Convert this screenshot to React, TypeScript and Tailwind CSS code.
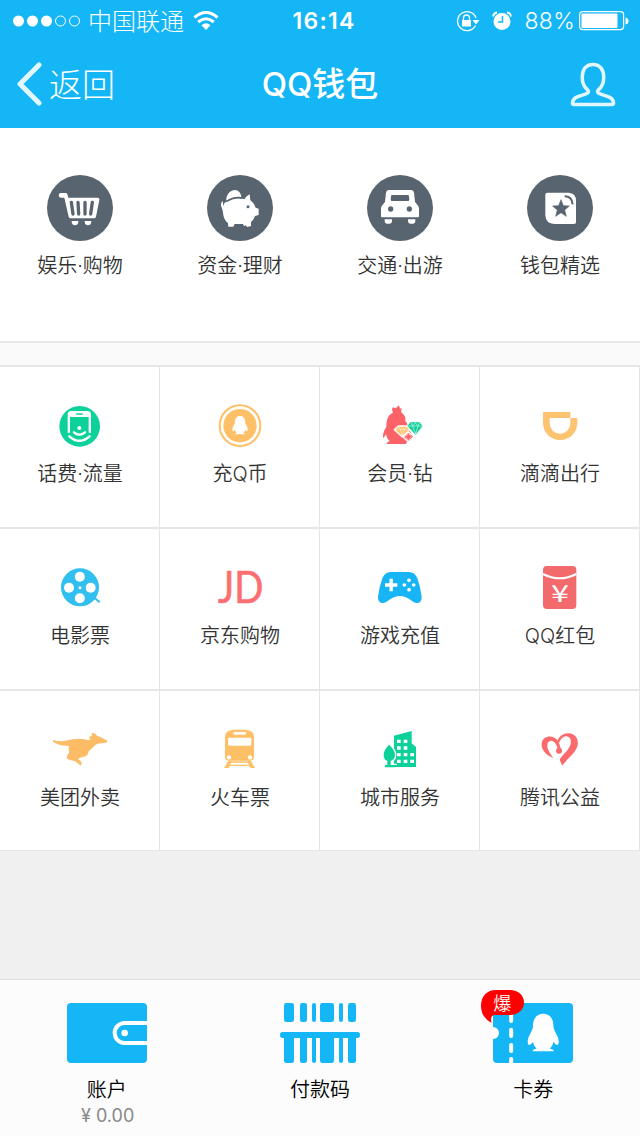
import type { ReactNode } from "react";

type Item = {
  label: string;
  icon: ReactNode;
};

const penguin =
  "M35 0C20 0 13 12 13 27C13 36 7 43 3 54C0 64 2 70 5 70C8 70 11 66 13 63C14 70 17 75 21 78C14 80 12 82 12 84H58C58 82 56 80 49 78C53 75 56 70 57 63C59 66 62 70 65 70C68 70 70 64 67 54C63 43 57 36 57 27C57 12 50 0 35 0Z";

function RoundIcon({ children }: { children: ReactNode }) {
  return (
    <svg viewBox="0 0 198 198" className="size-[66px]">
      <circle cx="99" cy="99" r="99" fill="#586571" />
      {children}
    </svg>
  );
}

function GridIcon({ children }: { children: ReactNode }) {
  return (
    <svg viewBox="0 0 180 180" className="size-[60px]">
      {children}
    </svg>
  );
}

const topItems: Item[] = [
  {
    label: "娱乐·购物",
    icon: (
      <RoundIcon>
        <path
          d="M42 54H56Q60 54 61 58L64 68H151Q158 68 157 75L147 125Q146 130 141 130H71Q66 130 65 125L52 68H42Q35 68 35 61T42 54Z"
          fill="#fff"
        />
        <path
          d="M73 82L78 117M93 82L95 117M114 82V117M136 82L131 117"
          stroke="#586571"
          strokeWidth="10"
          strokeLinecap="round"
        />
        <path d="M74 138H94A10 13 0 0 1 74 138ZM113 138H133A10 13 0 0 1 113 138Z" fill="#fff" />
      </RoundIcon>
    ),
  },
  {
    label: "资金·理财",
    icon: (
      <RoundIcon>
        <path d="M58 70C61 53 74 45 84 45C94 45 102 54 103 66Q80 63 58 77Z" fill="#fff" />
        <path
          d="M50 88C57 78 72 70 89 70C98 70 106 71 112 73C116 66 122 61 128 58L130 76C137 81 142 88 146 98L155 101V120L144 123C141 132 137 137 132 141V153L121 156L116 151L111 154L108 147H83L79 155H64L63 144C54 137 49 127 48 113C47 104 45 99 43 95C40 88 43 81 48 79C48 85 47 90 50 94Z"
          fill="#fff"
        />
        <path d="M58 80Q80 65 105 69" fill="none" stroke="#586571" strokeWidth="4" />
        <circle cx="123" cy="95" r="4.5" fill="#586571" />
      </RoundIcon>
    ),
  },
  {
    label: "交通·出游",
    icon: (
      <RoundIcon>
        <path
          fillRule="evenodd"
          d="M65 45H133Q140 45 141 53L144 81L151 89Q155 93 156 100V124Q156 127 153 127H45Q42 127 42 124V100Q43 93 47 89L54 81L57 53Q58 45 65 45ZM76 60Q72 60 72 64L71 74Q71 78 75 78H123Q127 78 127 74L126 64Q126 60 122 60Z"
          fill="#fff"
        />
        <circle cx="71" cy="102" r="8" fill="#586571" />
        <circle cx="127" cy="102" r="8" fill="#586571" />
        <path
          d="M53 133H75V139Q75 146 68 146H60Q53 146 53 139ZM123 133H145V139Q145 146 138 146H130Q123 146 123 139Z"
          fill="#fff"
        />
      </RoundIcon>
    ),
  },
  {
    label: "钱包精选",
    icon: (
      <RoundIcon>
        <path
          d="M61 53H125Q147 55 147 77V141Q147 147 141 147H82Q56 146 55 120V59Q55 53 61 53Z"
          fill="#fff"
        />
        <path
          d="M102 74L109 92L127 93L113 105L118 124L102 113L86 124L91 105L77 93L95 92Z"
          fill="#586571"
          stroke="#586571"
          strokeWidth="2"
        />
        <path d="M113 64Q135 64 137 88" fill="none" stroke="#586571" strokeWidth="6" />
      </RoundIcon>
    ),
  },
];

const services: Item[] = [
  {
    label: "话费·流量",
    icon: (
      <GridIcon>
        <circle cx="89" cy="91" r="61" fill="#0dd19b" />
        <path d="M53 110V56Q53 45 64 45H112Q123 45 123 56V110H116V63H60V110Z" fill="#fff" />
        <path d="M80 54H97" stroke="#0dd19b" strokeWidth="4" strokeLinecap="round" />
        <circle cx="88" cy="96" r="6" fill="#fff" />
        <path
          d="M72 109Q88 124 105 109M58 121Q88 148 119 121"
          fill="none"
          stroke="#fff"
          strokeWidth="7"
          strokeLinecap="round"
        />
      </GridIcon>
    ),
  },
  {
    label: "充Q币",
    icon: (
      <GridIcon>
        <circle cx="90" cy="89" r="61" fill="none" stroke="#fec066" strokeWidth="6" />
        <circle cx="90" cy="89" r="50" fill="#fec066" />
        <path d={penguin} fill="#fff" transform="translate(66 60) scale(.69 .65)" />
      </GridIcon>
    ),
  },
  {
    label: "会员·钻",
    icon: (
      <GridIcon>
        <path
          d="M66 40L68 34L77 37L87 28L90 38L95 36L93 48C103 55 108 64 106 76C112 80 113 86 112 92L124 112V132L108 140L109 144H50C50 140 54 137 60 136C53 130 50 124 48 115L40 127C37 115 43 102 49 93C49 72 54 56 69 50Z"
          fill="#fc6369"
        />
        <path
          d="M85 90H110L120 101L96 122L73 101Z"
          fill="#fec066"
          stroke="#fff"
          strokeWidth="4"
          strokeLinejoin="round"
        />
        <path
          d="M121 78H149L158 90L137 117L112 90Z"
          fill="#0dd19b"
          stroke="#fff"
          strokeWidth="1"
        />
        <path
          d="M115 108L132 121L116 138L99 123Z"
          fill="#fc6369"
          stroke="#fff"
          strokeWidth="4"
          strokeLinejoin="round"
        />
        <path
          d="M114 90H156M124 80L128 90L137 114L144 90L148 80M128 90L136 80L144 90M77 101H116M87 93L91 101L96 119L103 101L108 93M91 101L97 93L103 101M107 120L116 114L126 121M107 122L115 134L123 122"
          fill="none"
          stroke="#fff"
          strokeWidth="1.500"
        />
      </GridIcon>
    ),
  },
  {
    label: "滴滴出行",
    icon: (
      <GridIcon>
        <path
          fillRule="evenodd"
          d="M42 48H121V66H142V81A51.5 51.5 0 0 1 39 81V51Q39 48 42 48ZM59 66V82A31 31 0 0 0 121 82V66Z"
          fill="#fec371"
        />
      </GridIcon>
    ),
  },
  {
    label: "电影票",
    icon: (
      <GridIcon>
        <circle cx="90" cy="88" r="57" fill="#31bff0" />
        <path d="M128 118L138 123L149 133" fill="none" stroke="#31bff0" strokeWidth="6" />
        <g fill="#fff">
          <circle cx="89.500" cy="56" r="15" />
          <circle cx="57" cy="89" r="15" />
          <circle cx="122" cy="89" r="15" />
          <circle cx="89.500" cy="121" r="15" />
          <circle cx="90" cy="89" r="4.500" />
        </g>
      </GridIcon>
    ),
  },
  {
    label: "京东购物",
    icon: (
      <GridIcon>
        <text
          x="24"
          y="134"
          fontSize="132"
          textLength="136"
          lengthAdjust="spacingAndGlyphs"
          fill="#fb6f72"
          stroke="#fb6f72"
          strokeWidth="2"
          className="font-['Lato',sans-serif] font-normal"
        >
          JD
        </text>
      </GridIcon>
    ),
  },
  {
    label: "游戏充值",
    icon: (
      <GridIcon>
        <path
          d="M62 42H117Q134 42 142 61Q152 88 155 117Q156 134 142 135Q134 136 126 129Q107 114 90 114T53 129Q45 136 37 135Q23 134 24 117Q27 88 37 61Q45 42 62 42Z"
          fill="#18b5f6"
        />
        <path d="M45 81H82M63.500 62V100" stroke="#fff" strokeWidth="10" />
        <g fill="#fff">
          <circle cx="117" cy="67" r="5.500" />
          <circle cx="103" cy="81" r="5.500" />
          <circle cx="131" cy="81" r="5.500" />
          <circle cx="117" cy="95" r="5.500" />
        </g>
      </GridIcon>
    ),
  },
  {
    label: "QQ红包",
    icon: (
      <GridIcon>
        <rect x="39" y="24" width="100" height="129" rx="12" fill="#f26a6c" />
        <path d="M39 48Q89 74 139 48" fill="none" stroke="#fff" strokeWidth="6" />
        <text
          x="63"
          y="133"
          fontSize="72"
          textLength="54"
          lengthAdjust="spacingAndGlyphs"
          fill="#fff"
          className="font-['Noto_Sans_CJK_SC',sans-serif] font-normal"
        >
          ¥
        </text>
      </GridIcon>
    ),
  },
  {
    label: "美团外卖",
    icon: (
      <GridIcon>
        <path
          d="M9 60Q28 67 46 62Q84 53 103 58Q114 63 123 58Q116 57 118 52Q120 48 127 48Q121 39 129 39Q138 41 141 47Q155 51 172 62Q173 69 161 69Q144 69 136 75Q128 84 116 94Q114 110 96 112Q86 114 84 118Q93 122 95 128L93 137Q85 131 74 123Q55 120 50 115Q50 105 57 98Q59 94 56 89V77Q33 79 22 72Q15 67 9 65Z"
          fill="#fcbb65"
        />
      </GridIcon>
    ),
  },
  {
    label: "火车票",
    icon: (
      <GridIcon>
        <path
          fillRule="evenodd"
          d="M71 29H106Q132 31 132 50V110Q132 122 120 122H57Q45 122 45 110V50Q45 31 71 29ZM74 36Q70 36 70 40T74 44H105Q109 44 109 40T105 36ZM58 53Q54 53 54 57V73Q54 77 58 77H120Q124 77 124 73V57Q124 53 120 53Z"
          fill="#fec066"
        />
        <circle cx="57" cy="112" r="6.500" fill="#fff" />
        <circle cx="120" cy="112" r="6.500" fill="#fff" />
        <path d="M55 122H66L56 144H42ZM122 122H111L121 144H135Z" fill="#fec066" />
        <path d="M62 126H115M56 136H121" stroke="#fec066" strokeWidth="4" />
      </GridIcon>
    ),
  },
  {
    label: "城市服务",
    icon: (
      <GridIcon>
        <path d="M72 47L125 33V70L138 81V141H72Z" fill="#0dd19b" />
        <path
          d="M81 59h11v10h-11zM101 59h11v10h-11zM81 79h11v10h-11zM101 79h11v10h-11zM81 99h11v10h-11zM101 99h11v10h-11zM121 99h11v10h-11zM81 119h11v10h-11zM101 119h11v10h-11zM121 119h11v10h-11z"
          fill="#fff"
        />
        <path
          d="M57 74C66 82 75 93 75 104C75 115 69 121 62 122V135H76V142H45V135H52V122C45 121 41 114 41 104C41 93 49 82 57 74Z"
          fill="#0dd19b"
          stroke="#fff"
          strokeWidth="8"
          paintOrder="stroke"
        />
        <path d="M45 138H138" stroke="#0dd19b" strokeWidth="6" />
      </GridIcon>
    ),
  },
  {
    label: "腾讯公益",
    icon: (
      <GridIcon>
        <path
          d="M70 114C48 105 33 88 35 71C37 55 50 48 64 50C80 52 89 65 92 87L84 88C80 72 73 63 64 62C53 62 49 74 54 88Q59 101 70 114Z"
          fill="#fb6a6d"
        />
        <circle cx="87" cy="92" r="9" fill="#fb6a6d" />
        <path
          d="M82 63C87 48 102 39 117 40C136 42 146 56 143 75C139 98 111 116 97 137L89 120C93 107 114 94 121 75C127 57 117 48 105 49Q93 53 88 68Z"
          fill="#fb6a6d"
        />
      </GridIcon>
    ),
  },
];

function StatusBar() {
  return (
    <div className="flex h-10 items-center pt-0.5 text-2xl leading-none whitespace-nowrap">
      <div className="flex flex-1 items-center pl-3">
        <svg viewBox="0 0 70 14" className="h-3.5 w-[70px]" fill="#fff">
          <circle cx="6.500" cy="7" r="5.500" />
          <circle cx="20.500" cy="7" r="5.500" />
          <circle cx="34.500" cy="7" r="5.500" />
          <g fill="none" stroke="#fff">
            <circle cx="48.500" cy="7" r="5" />
            <circle cx="62.500" cy="7" r="5" />
          </g>
        </svg>
        <span className="ml-1.5 pt-px font-light">中国联通</span>
        <svg viewBox="0 0 26 20" className="ml-[9px] h-5 w-[26px]" fill="none" stroke="#fff">
          <path d="M1.500 6.500Q13-3.500 24.500 6.500M5.200 11Q13 4.400 20.800 11" strokeWidth="3" />
          <path d="M8.500 14.200Q13 10.500 17.500 14.200L13 19Z" fill="#fff" stroke="none" />
        </svg>
      </div>
      <div className="pl-[7px] text-center text-[23px] font-semibold tracking-[1.2px]">16:14</div>
      <div className="flex flex-1 items-center justify-end pr-[11px]">
        <svg viewBox="0 0 24 22" className="h-[22px] w-6" fill="none" stroke="#fff" strokeWidth="1.300">
          <path d="M19.500 15.500A9.500 9.500 0 1 1 20 8" />
          <path d="M16.500 10H23.500L20 14.500Z" fill="#fff" stroke="none" />
          <rect x="6" y="10" width="9" height="6.500" fill="#fff" stroke="none" />
          <path d="M7.500 10V8A3 3 0 0 1 13.500 8V10" />
        </svg>
        <svg viewBox="0 0 20 20" className="ml-3 size-5" fill="#fff">
          <circle cx="10" cy="10.500" r="8.500" />
          <path d="M1 5.500Q1.500 2 5 1.500M15 1.500Q18.500 2 19 5.500" fill="none" stroke="#fff" strokeWidth="1.800" />
          <path d="M10.500 5V11H6" fill="none" stroke="#14b6f6" strokeWidth="1.500" />
        </svg>
        <span className="ml-3 text-[23px] font-light tracking-[0.3px]">88%</span>
        <svg viewBox="0 0 50 20" className="ml-1 h-5 w-[50px]">
          <rect x=".6" y=".6" width="44" height="18" rx="3" fill="none" stroke="#fff" strokeWidth="1.200" />
          <rect x="2.500" y="2.500" width="36" height="14.500" rx="1" fill="#fff" />
          <path d="M46.500 6.500Q49.500 7 49.500 10T46.500 13.500Z" fill="#fff" />
        </svg>
      </div>
    </div>
  );
}

function NavBar() {
  return (
    <div className="grid h-[88px] grid-cols-3 items-center">
      <div className="flex items-center pl-4 text-[33px] leading-none font-light">
        <svg viewBox="0 0 27 44" className="mr-1.5 h-11 w-[27px]">
          <path
            d="M23 3L4 22L23 41"
            fill="none"
            stroke="#e2f6ff"
            strokeWidth="5"
            strokeLinecap="round"
            strokeLinejoin="round"
          />
        </svg>
        <span className="pt-0.5">返回</span>
      </div>
      <div className="pt-px text-center text-[33px] leading-none font-medium">QQ钱包</div>
      <svg viewBox="0 0 46 46" className="mr-6 size-[46px] justify-self-end pt-px">
        <path
          d="M23 2.500C15.500 2.500 12 8 12 15.500C12 21 14.500 26 17.500 28.500C19 30 18.500 31 17 32C12 35 2.500 34.500 2 42Q2 43.500 4 43.500H42Q44 43.500 44 42C43.500 34.500 34 35 29 32C27.500 31 27 30 28.500 28.500C31.500 26 34 21 34 15.500C34 8 30.500 2.500 23 2.500Z"
          fill="none"
          stroke="#e2f6ff"
          strokeWidth="3.600"
        />
      </svg>
    </div>
  );
}

export default function App() {
  return (
    <div className="flex h-[1136px] w-[640px] flex-col bg-[#f0f0f0] font-['Inter','Noto_Sans_CJK_SC',sans-serif] font-[350] text-[#333]">
      <header className="h-32 bg-[#14b6f6] text-white">
        <StatusBar />
        <NavBar />
      </header>

      <section className="grid h-[215px] grid-cols-4 border-b-2 border-[#e8e8e8] bg-white pt-[47px]">
        {topItems.map((item) => (
          <div key={item.label} className="flex flex-col items-center">
            {item.icon}
            <span className="mt-[15px] text-xl leading-5">{item.label}</span>
          </div>
        ))}
      </section>
      <div className="h-6 border-b-2 border-[#e6e6e6] bg-[#fafafa]" />

      <section className="grid grid-cols-4">
        {services.map((item, i) => (
          <div
            key={item.label}
            className={
              i < 8
                ? "flex h-[162px] flex-col items-center border-r border-b-2 border-[#e6e6e6] bg-white pt-[29px] pl-px"
                : "flex h-40 flex-col items-center border-r border-b border-[#e6e6e6] bg-white pt-[29px] pl-px"
            }
          >
            {item.icon}
            <span className="mt-2 text-xl leading-5">{item.label}</span>
          </div>
        ))}
      </section>

      <nav className="mt-auto grid h-[157px] grid-cols-3 border-t border-[#dedede] bg-[#fcfcfc] pt-[23px] text-xl leading-5 text-black">
        <div className="flex flex-col items-center">
          <svg viewBox="0 0 240 180" className="h-[60px] w-20">
            <rect width="240" height="180" rx="12" fill="#14b6f6" />
            <path d="M240 60H173A30 30 0 0 0 173 120H240" fill="none" stroke="#fff" strokeWidth="12" />
            <circle cx="173" cy="90" r="10" fill="#fff" />
          </svg>
          <span className="mt-[17px]">账户</span>
          <span className="mt-1.5 pl-0.5 text-lg leading-5 font-normal text-[#888]">¥ 0.00</span>
        </div>
        <div className="flex flex-col items-center">
          <svg viewBox="0 0 240 180" className="h-[60px] w-20" fill="#14b6f6">
            <rect x="12" width="30" height="57" rx="7" />
            <rect x="60" width="21" height="57" rx="7" />
            <rect x="96" width="12" height="57" rx="6" />
            <rect x="120" width="42" height="57" rx="7" />
            <rect x="177" width="12" height="57" rx="6" />
            <rect x="204" width="24" height="57" rx="7" />
            <rect y="87" width="240" height="18" rx="8" />
            <rect x="12" y="96" width="30" height="84" rx="7" />
            <rect x="60" y="96" width="21" height="84" rx="7" />
            <rect x="96" y="96" width="12" height="84" rx="6" />
            <rect x="120" y="96" width="42" height="84" rx="7" />
            <rect x="177" y="96" width="12" height="84" rx="6" />
            <rect x="204" y="96" width="24" height="84" rx="7" />
          </svg>
          <span className="mt-[17px]">付款码</span>
        </div>
        <div className="flex flex-col items-center">
          <div className="relative">
            <svg viewBox="0 0 240 180" className="h-[60px] w-20">
              <rect width="240" height="180" rx="12" fill="#14b6f6" />
              <circle cy="90" r="18" fill="#fff" />
              <path
                d="M54.500 36V54M54.500 80V99M54.500 126V144M54.500 168V180"
                stroke="#fff"
                strokeWidth="12"
                strokeLinecap="round"
              />
              <path d={penguin} fill="#fff" transform="translate(102 32) scale(1.39 1.34)" />
            </svg>
            <div className="absolute -top-[13px] -left-3 h-[34px] w-[43px]">
              <svg viewBox="0 0 43 34" className="absolute inset-0">
                <path
                  d="M15 0H29C37 0 43 5 43 12.500S37 25 29 25H13Q9 26 10.500 33Q0 27 0 16C0 6 6 0 15 0Z"
                  fill="#fd0000"
                />
              </svg>
              <span className="absolute top-[5px] left-3 text-lg leading-[18px] text-white">爆</span>
            </div>
          </div>
          <span className="mt-[17px]">卡券</span>
        </div>
      </nav>
    </div>
  );
}
